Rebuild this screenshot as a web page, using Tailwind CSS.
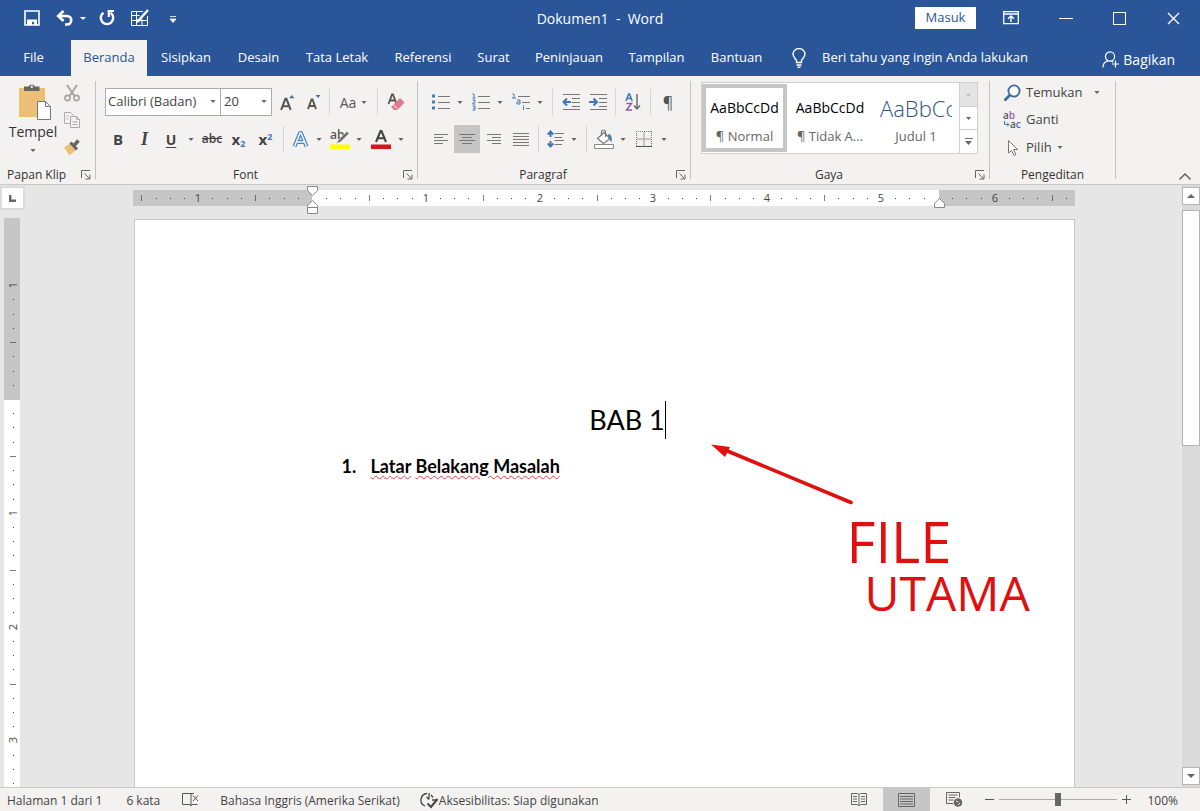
<!DOCTYPE html>
<html lang="id">
<head>
<meta charset="utf-8">
<title>Dokumen1 - Word</title>
<script src="https://cdn.jsdelivr.net/npm/@tailwindcss/browser@4"></script>
</head>
<body class="flex h-screen flex-col overflow-hidden bg-[#e6e6e6] font-['Open_Sans','Noto_Sans',sans-serif] text-[13px] text-[#444]">

<svg class="hidden">
  <symbol id="caret" viewBox="0 0 7 4"><path d="M0 0h7L3.500 4z" fill="#666"/></symbol>
  <symbol id="launch" viewBox="0 0 10 10"><path d="M.5 8V.5H9M3.500 3.500l5 5M9 4.500V9H4.500" fill="none" stroke="#666"/></symbol>
</svg>

<!-- Title bar -->
<header class="shrink-0 bg-[#2a5699] text-white">
  <div class="grid h-10 grid-cols-[1fr_auto_1fr] items-center">
    <div class="flex items-center pb-1 pl-6">
      <button aria-label="Simpan" class="mr-4"><svg class="size-4" viewBox="0 0 16 16"><path d="M1 1h14v14H1z" fill="none" stroke="#fff" stroke-width="1.600"/><path d="M3 9.500h10V15h-3v-3H8v3H3z" fill="#fff"/></svg></button>
      <button aria-label="Urungkan" class="flex items-center gap-[6px]"><svg class="h-4 w-[18px]" viewBox="0 0 18 16"><path d="M2 6h9a4 4 0 0 1 0 8.500H9" fill="none" stroke="#fff" stroke-width="2.600"/><path d="M7.500 1L2.200 6l5.300 5" fill="none" stroke="#fff" stroke-width="2.600"/></svg><svg class="h-[3px] w-[6px]" viewBox="0 0 6 3"><path d="M0 0h6L3 3z" fill="#fff"/></svg></button>
      <button aria-label="Ulangi" class="ml-[13px]"><svg class="size-4" viewBox="0 0 16 16"><path d="M4.500 2.800A6.200 6.200 0 1 0 11.500 2.800" fill="none" stroke="#fff" stroke-width="2.400"/><path d="M8.600.9h6.400M9.800 0v7" fill="none" stroke="#fff" stroke-width="2.200"/></svg></button>
      <button aria-label="Gambar tabel" class="ml-4"><svg class="size-[18px]" viewBox="0 0 18 18" fill="none" stroke="#fff"><path d="M12 2.500H.5v14h16V7M.5 6.500h8M.5 11.500h16M5.500 2.500v14M11 10v6.500"/><path d="M17 1L7.500 11.500" stroke-width="2.400"/><path d="M7 10l-1.500 3.500L9 12z" fill="#fff"/></svg></button>
      <button aria-label="Sesuaikan bilah akses cepat" class="mt-[2px] ml-[21px]"><svg class="h-[7px] w-[6px]" viewBox="0 0 6 7"><path d="M0 .5h6M0 3h6L3 6.500z" fill="#fff" stroke="#fff" stroke-width=".8"/></svg></button>
    </div>
    <h1 class="pb-1 text-[14px] whitespace-pre">Dokumen1  -  Word</h1>
    <div class="flex items-center justify-end pb-1">
      <button class="h-[22px] w-[61px] bg-white text-[#2a5699]">Masuk</button>
      <button aria-label="Opsi tampilan pita" class="ml-[27px] w-[18px]"><svg class="h-[14px] w-4" viewBox="0 0 16 14" fill="none" stroke="#fff"><path d="M.7 .7h14.600v12H.7zM.7 3h14.600" stroke-width="1.300"/><path d="M8 11V5M5 7.800L8 5l3 2.800" stroke-width="1.400"/></svg></button>
      <button aria-label="Perkecil" class="ml-[38px] h-3 w-[14px]"><span class="block h-px bg-white"></span></button>
      <button aria-label="Perbesar" class="ml-[40px] size-[13px] border border-white"></button>
      <button aria-label="Tutup" class="mr-5 ml-[41px]"><svg class="size-[13px]" viewBox="0 0 13 13"><path d="M1 1l11 11M12 1L1 12" stroke="#fff" stroke-width="1.400"/></svg></button>
    </div>
  </div>
  <!-- Ribbon tabs -->
  <nav class="flex h-9 items-stretch pl-[9px]">
    <button class="w-[49px]">File</button>
    <button class="ml-[13px] w-[76px] bg-[#f3f2f1] text-[#2a5699]">Beranda</button>
    <button class="w-[78px]">Sisipkan</button>
    <button class="w-[67px]">Desain</button>
    <button class="w-[90px]">Tata Letak</button>
    <button class="w-[82px]">Referensi</button>
    <button class="w-[59px]">Surat</button>
    <button class="w-[92px]">Peninjauan</button>
    <button class="w-[83px]">Tampilan</button>
    <button class="w-[77px]">Bantuan</button>
    <button class="ml-[17px] flex items-center gap-4"><svg class="h-5 w-[14px]" viewBox="0 0 14 20" fill="none" stroke="#fff" stroke-width="1.400"><path d="M4.500 14.500v-2C3.500 10.500 1 9 1 6a6 5.400 0 0 1 12 0c0 3-2.500 4.500-3.500 6.500v2zM4.500 17h5M5.500 19.300h3"/></svg>Beri tahu yang ingin Anda lakukan</button>
    <button class="mr-[25px] ml-auto flex items-center gap-1 pt-[3px] text-[14px]"><svg class="size-[17px]" viewBox="0 0 17 17" fill="none" stroke="#fff" stroke-width="1.200"><circle cx="8" cy="5.500" r="4.600"/><path d="M1 16.500c0-4 2.500-6 5-6.600M9.500 10l1.500 1.200M13.500 9.500v7M10 13h7"/></svg>Bagikan</button>
  </nav>
</header>

<!-- Ribbon -->
<section aria-label="Beranda" class="flex h-[109px] shrink-0 items-start border-b border-[#c8c8c8] bg-[#f3f2f1] pt-[5px]">

  <div class="flex h-[98px] w-24 flex-col border-r border-[#c2c2c2]">
    <div class="flex h-[88px] shrink-0">
      <button class="ml-2 flex w-[50px] flex-col items-center justify-start pt-[3px] text-[#333]">
        <svg class="ml-1 h-9 w-8" viewBox="0 0 32 36"><path d="M0 4h26v29H0z" fill="#ebbf74"/><path d="M5 7V2.500h4.500a3.500 3 0 0 1 6.500 0h4.500V7z" fill="#666"/><circle cx="12.800" cy="2.800" r="1.200" fill="#f3f2f1"/><path d="M18.500 17.500h8l5 5v13h-13z" fill="#fff" stroke="#777"/><path d="M26.500 17.500v5h5" fill="none" stroke="#777"/></svg>
        <span class="text-[14px] leading-6">Tempel</span>
        <svg class="mt-[5px] h-[3px] w-[6px]"><use href="#caret"/></svg>
      </button>
      <div class="flex w-[28px] flex-col items-center gap-[9px] pt-[3px]">
        <button aria-label="Potong"><svg class="size-[18px]" viewBox="0 0 18 18" fill="none" stroke="#a6a6a6" stroke-width="1.600"><path d="M4 1l7.500 11M14 1L6.500 12" stroke-width="2"/><circle cx="4.500" cy="14" r="2.600"/><circle cx="13.500" cy="14" r="2.600"/></svg></button>
        <button aria-label="Salin"><svg class="size-[18px]" viewBox="0 0 18 18" fill="#f3f2f1" stroke="#b0a9b5"><path d="M1.500 1.500h6l3 3v8h-9z"/><path d="M7.500 5.500h6l3 3v8h-9zM13.500 5.500v3h3M9.500 11h5M9.500 13.500h5M3.500 5h2M3.500 8h2"/></svg></button>
        <button aria-label="Pewarna format"><svg class="size-[18px]" viewBox="0 0 18 18"><path d="M7 5.500L13 12 6.500 17.500 1 9.500z" fill="#ebbf74"/><path d="M7.500 4.500l6.500 7" stroke="#666" stroke-width="3"/><path d="M11 7.500L15.500 2.500" stroke="#666" stroke-width="3.400"/></svg></button>
      </div>
    </div>
    <div class="flex h-[12px] items-center justify-between pr-1 pl-[7px]"><span class="text-[12px] leading-[18px] text-[#333]">Papan Klip</span><button aria-label="Opsi papan klip"><svg class="size-[10px]"><use href="#launch"/></svg></button></div>
  </div>

  <div class="flex h-[98px] w-[322px] flex-col border-r border-[#c2c2c2]">
    <div class="flex h-[88px] shrink-0 flex-col pl-[9px]">
      <div class="mt-[7px] flex h-7 items-center">
        <div class="relative h-7 w-[116px]"><select aria-label="Font" class="size-full appearance-none border border-[#ababab] bg-white pl-[2px]"><option>Calibri (Badan)</option></select><svg class="pointer-events-none absolute top-3 right-[5px] h-[3px] w-[6px]"><use href="#caret"/></svg></div>
        <div class="relative h-7 w-[51px]"><select aria-label="Ukuran font" class="size-full appearance-none border border-l-0 border-[#ababab] bg-white pl-[3px]"><option>20</option></select><svg class="pointer-events-none absolute top-3 right-[5px] h-[3px] w-[6px]"><use href="#caret"/></svg></div>
        <button aria-label="Perbesar font" class="flex w-[30px] justify-center"><svg class="h-[17px] w-[17px]" viewBox="0 0 16 16"><path d="M2 15L6 4.500h1L11 15M3.300 11.500h6.400" fill="none" stroke="#555" stroke-width="1.900"/><path d="M9.500 4L12 1l2.500 3z" fill="#41719c"/></svg></button>
        <button aria-label="Perkecil font" class="flex w-[23px] justify-center"><svg class="h-4 w-4" viewBox="0 0 16 16"><path d="M2 15L5.500 5.500h1L10 15M3.300 12h5.400" fill="none" stroke="#555" stroke-width="1.900"/><path d="M9.500 1L12 4l2.500-3z" fill="#41719c"/></svg></button>
        <span class="mx-1 h-[26px] w-px bg-[#d4d4d4]"></span>
        <button aria-label="Ubah huruf besar/kecil" class="flex w-[39px] items-center justify-center gap-[5px] text-[14px] text-[#555]">Aa<svg class="h-[3px] w-[6px]"><use href="#caret"/></svg></button>
        <span class="mx-1 h-[26px] w-px bg-[#d4d4d4]"></span>
        <button aria-label="Hapus format" class="flex w-[28px] justify-center"><svg class="size-[18px]" viewBox="0 0 18 18"><path d="M1.500 11L5 1.500h1L9.500 11M2.800 7.500h5.500" fill="none" stroke="#555" stroke-width="1.800"/><path d="M13 5l4.500 4.500-7 7.500H7l-3-3z" fill="#e0798a"/><path d="M6 11.500l5 5" stroke="#f3f2f1"/></svg></button>
      </div>
      <div class="mt-[9px] flex h-7 items-center">
        <button aria-label="Tebal" class="w-[26px] text-[15px] font-bold">B</button>
        <button aria-label="Miring" class="w-[27px] font-['Liberation_Serif',serif] text-[18px] font-bold italic">I</button>
        <button aria-label="Garis bawah" class="flex w-[41px] items-center"><span class="w-[26px] text-[14px] font-bold underline underline-offset-2">U</span><span class="flex w-[14px] justify-center"><svg class="h-[3px] w-[6px]"><use href="#caret"/></svg></span></button>
        <button aria-label="Coret" class="w-[26px] text-[12px] font-semibold line-through">abc</button>
        <button aria-label="Subskrip" class="w-[27px] text-[15px] leading-none font-bold">x<sub class="text-[9px] text-[#3c78b4]">2</sub></button>
        <button aria-label="Superskrip" class="w-[27px] text-[15px] leading-none font-bold">x<sup class="text-[9px] text-[#3c78b4]">2</sup></button>
        <span class="mr-[3px] ml-1 h-[26px] w-px bg-[#d4d4d4]"></span>
        <button aria-label="Efek teks" class="flex w-[38px] items-center"><span class="flex w-[26px] justify-center"><svg class="size-[17px]" viewBox="0 0 17 17"><path d="M2.500 15.500L8 2h1l5.500 13.500M4.500 11h8" fill="none" stroke="#4a86c0" stroke-width="4" stroke-linejoin="round"/><path d="M2.500 15.500L8 2h1l5.500 13.500M4.500 11h8" fill="none" stroke="#f3f8fd" stroke-width="1.500"/></svg></span><span class="flex w-3 justify-center"><svg class="h-[3px] w-[6px]"><use href="#caret"/></svg></span></button>
        <button aria-label="Warna sorotan" class="ml-[2px] flex w-[38px] items-center"><span class="flex w-[26px] justify-center"><svg class="h-5 w-5 overflow-visible" viewBox="0 0 20 20"><text x="0" y="10" font-size="12" font-weight="600" fill="#555" font-family="Open Sans, sans-serif">ab</text><path d="M8.500 11L17 2.500l2 2L10.500 13 6 14.500z" fill="#666" stroke="#f3f2f1" stroke-width=".6"/><path d="M0 15.500h20V20H0z" fill="#ff0"/></svg></span><span class="flex w-3 justify-center"><svg class="h-[3px] w-[6px]"><use href="#caret"/></svg></span></button>
        <button aria-label="Warna font" class="ml-[3px] flex w-[40px] items-center"><span class="flex w-[26px] justify-center"><svg class="h-5 w-5" viewBox="0 0 20 20"><path d="M5 13L9.500 2h1L15 13M6.500 9.300h7" fill="none" stroke="#444" stroke-width="2.100"/><path d="M0 15.500h20V20H0z" fill="#d81414"/></svg></span><span class="flex w-[14px] justify-center"><svg class="h-[3px] w-[6px]"><use href="#caret"/></svg></span></button>
      </div>
    </div>
    <div class="grid h-[12px] grid-cols-[1fr_auto_1fr] grid-rows-[12px] items-center pr-1"><span></span><span class="pr-[18px] text-[12px] leading-[18px] text-[#333]">Font</span><button aria-label="Opsi font" class="justify-self-end"><svg class="size-[10px]"><use href="#launch"/></svg></button></div>
  </div>

  <div class="flex h-[98px] w-[273px] flex-col border-r border-[#c2c2c2]">
    <div class="flex h-[88px] shrink-0 flex-col pl-[10px]">
      <div class="mt-[7px] flex h-7 items-center">
        <button aria-label="Poin" class="flex w-[38px] items-center"><span class="flex w-[26px] justify-center"><svg class="h-4 w-[18px]" viewBox="0 0 18 16"><path d="M0 .5h3v3H0zM0 6.500h3v3H0zM0 12.500h3v3H0z" fill="#4a7ab5"/><path d="M6 2.500h12M6 8.500h12M6 14.500h12" stroke="#777"/></svg></span><span class="flex w-3 justify-center"><svg class="h-[3px] w-[6px]"><use href="#caret"/></svg></span></button>
        <button aria-label="Penomoran" class="ml-[2px] flex w-[38px] items-center"><span class="flex w-[26px] justify-center"><svg class="h-[18px] w-[18px]" viewBox="0 0 18 18"><path d="M.5 1H2v4M.5 5h3M.5 7h2.500v2L.5 10.500V11H3.500M.5 13h2.500v4H.5M1 15h2" fill="none" stroke="#4a7ab5"/><path d="M6 3.500h12M6 9.500h12M6 15.500h12" stroke="#777"/></svg></span><span class="flex w-3 justify-center"><svg class="h-[3px] w-[6px]"><use href="#caret"/></svg></span></button>
        <button aria-label="Daftar bertingkat" class="ml-[2px] flex w-[38px] items-center"><span class="flex w-[26px] justify-center"><svg class="h-[18px] w-[18px]" viewBox="0 0 18 18"><path d="M.5 1H2v4M0 5h4M5 7h3v4H5V9h3M11.500 12v.8M11.500 13.500V17" fill="none" stroke="#4a7ab5"/><path d="M6 3.500h12M10 9.500h8M14 15.500h4" stroke="#777"/></svg></span><span class="flex w-3 justify-center"><svg class="h-[3px] w-[6px]"><use href="#caret"/></svg></span></button>
        <span class="mr-1 ml-[6px] h-[26px] w-px bg-[#d4d4d4]"></span>
        <button aria-label="Kurangi inden" class="flex w-[27px] justify-center"><svg class="h-4 w-[18px]" viewBox="0 0 18 16"><path d="M1 .5h17M10 4.500h8M10 8.500h8M10 12.500h8M1 15.500h17" stroke="#777"/><path d="M9 8H2M5 4.500L1.500 8 5 11.500" fill="none" stroke="#3f74b5" stroke-width="2"/></svg></button>
        <button aria-label="Tambah inden" class="flex w-[27px] justify-center"><svg class="h-4 w-[18px]" viewBox="0 0 18 16"><path d="M1 .5h17M10 4.500h8M10 8.500h8M10 12.500h8M1 15.500h17" stroke="#777"/><path d="M0 8h7M4.500 4.500L8 8l-3.500 3.500" fill="none" stroke="#3f74b5" stroke-width="2"/></svg></button>
        <span class="mx-1 h-[26px] w-px bg-[#d4d4d4]"></span>
        <button aria-label="Urutkan" class="flex w-[26px] justify-center"><svg class="h-[18px] w-4" viewBox="0 0 16 18" fill="none"><path d="M1 8L3.700 1h.8L7.200 8M2 5.500h4.200" stroke="#3f74b5" stroke-width="1.500"/><path d="M1.500 10.500h5L1.500 17h5.500" stroke="#8e5aa8" stroke-width="1.500"/><path d="M12 1v15M9 12.500l3 3.500 3-3.500" stroke="#666" stroke-width="1.400"/></svg></button>
        <span class="mx-1 h-[26px] w-px bg-[#d4d4d4]"></span>
        <button aria-label="Tampilkan tanda paragraf" class="w-[26px] text-[16px] text-[#555]">¶</button>
      </div>
      <div class="mt-[9px] flex h-7 items-center">
        <button aria-label="Rata kiri" class="flex h-7 w-[26px] items-center justify-center"><svg class="h-3 w-[14px]" viewBox="0 0 14 12"><path d="M0 1.500h14M0 4.500h9M0 7.500h14M0 10.500h9" stroke="#777"/></svg></button>
        <button aria-label="Rata tengah" aria-pressed="true" class="flex h-7 w-[26px] items-center justify-center bg-[#c6c6c6]"><svg class="h-3 w-4" viewBox="0 0 16 12"><path d="M0 1.500h16M3 4.500h10M0 7.500h16M3 10.500h10" stroke="#777"/></svg></button>
        <button aria-label="Rata kanan" class="flex h-7 w-[27px] items-center justify-center"><svg class="h-3 w-[14px]" viewBox="0 0 14 12"><path d="M0 1.500h14M5 4.500h9M0 7.500h14M5 10.500h9" stroke="#777"/></svg></button>
        <button aria-label="Rata kiri-kanan" class="flex h-7 w-[27px] items-center justify-center"><svg class="h-[13px] w-4" viewBox="0 0 16 13"><path d="M0 .5h16M0 3.500h16M0 6.500h16M0 9.500h16M0 12.500h16" stroke="#777"/></svg></button>
        <span class="mr-[3px] ml-1 h-[26px] w-px bg-[#d4d4d4]"></span>
        <button aria-label="Spasi baris" class="flex w-[38px] items-center"><span class="flex w-[26px] justify-center"><svg class="h-[18px] w-[17px]" viewBox="0 0 17 18"><path d="M3.500 1.500v5.500M3.500 11v5.500M.8 4.500L3.500 1.500l2.700 3M.8 13.500l2.700 3 2.700-3" fill="none" stroke="#3f74b5" stroke-width="1.900"/><path d="M7.500 3.500H17M7.500 7.500H15M7.500 10.500H17M7.500 14.500H15" stroke="#777"/></svg></span><span class="flex w-3 justify-center"><svg class="h-[3px] w-[6px]"><use href="#caret"/></svg></span></button>
        <span class="mr-1 ml-[6px] h-[26px] w-px bg-[#d4d4d4]"></span>
        <button aria-label="Arsiran" class="flex w-[38px] items-center"><span class="flex w-[26px] justify-center"><svg class="h-5 w-5" viewBox="0 0 20 20" fill="none"><path d="M10 3.500l6 6-6.500 5-6-5z" fill="#fff" stroke="#777" stroke-width="1.200"/><path d="M7.500 6.500V3a2 2 0 0 1 4 0v5" stroke="#777" stroke-width="1.200"/><path d="M14 5c3 0 4.500 3 3.500 8.500L14.500 9z" fill="#4a7f9f"/><path d="M.5 15.500h19v4H.5z" fill="#fff" stroke="#888"/></svg></span><span class="flex w-3 justify-center"><svg class="h-[3px] w-[6px]"><use href="#caret"/></svg></span></button>
        <button aria-label="Batas" class="ml-[2px] flex w-[40px] items-center"><span class="flex w-[26px] justify-center"><svg class="h-4 w-4" viewBox="0 0 16 16" fill="none" stroke="#777"><path d="M.5 0v15M15.500 0v15M0 .5h16" stroke-dasharray="1 1"/><path d="M8 1v14M1 8h14" stroke="#999"/><path d="M0 15.500h16" stroke="#555"/></svg></span><span class="flex w-[14px] justify-center"><svg class="h-[3px] w-[6px]"><use href="#caret"/></svg></span></button>
      </div>
    </div>
    <div class="grid h-[12px] grid-cols-[1fr_auto_1fr] grid-rows-[12px] items-center pr-1"><span></span><span class="pr-[18px] text-[12px] leading-[18px] text-[#333]">Paragraf</span><button aria-label="Opsi paragraf" class="justify-self-end"><svg class="size-[10px]"><use href="#launch"/></svg></button></div>
  </div>

  <div class="flex h-[98px] w-[299px] flex-col border-r border-[#c2c2c2]">
    <div class="h-[88px] shrink-0 pl-[10px]">
      <div class="mt-px flex h-[72px] w-[277px] border border-[#d0d0d0] bg-white">
        <button class="my-px flex w-[85px] shrink-0 flex-col items-center justify-start overflow-hidden border-4 border-[#c6c6c6]"><span class="pt-[6px] text-[14px] leading-7 text-black">AaBbCcDd</span><span class="leading-[28px] whitespace-nowrap text-[#666]">¶ Normal</span></button>
        <button class="flex w-[86px] shrink-0 flex-col items-center justify-start overflow-hidden pt-[5px]"><span class="pt-[6px] text-[14px] leading-7 text-black">AaBbCcDd</span><span class="leading-[28px] whitespace-nowrap text-[#666]">¶ Tidak A...</span></button>
        <button class="flex w-[86px] shrink-0 flex-col items-center justify-start px-[7px] pt-[5px]"><span class="w-[72px] overflow-hidden pt-[6px] text-left text-[22px] leading-7 font-light whitespace-nowrap text-[#2e5583]">AaBbCc</span><span class="leading-[28px] whitespace-nowrap text-[#666]">Judul 1</span></button>
        <div class="flex flex-1 flex-col border-l border-[#d0d0d0]">
          <button aria-label="Gulir ke atas" class="flex flex-1 items-center justify-center bg-[#e4e4e4]"><svg class="h-[3px] w-[5px]" viewBox="0 0 6 3"><path d="M0 3h6L3 0z" fill="#bbb"/></svg></button>
          <button aria-label="Gulir ke bawah" class="flex flex-1 items-center justify-center border-y border-[#d0d0d0]"><svg class="h-[3px] w-[5px]"><use href="#caret"/></svg></button>
          <button aria-label="Gaya lainnya" class="flex flex-1 flex-col items-center justify-center gap-[2px]"><span class="h-px w-2 bg-[#777]"></span><svg class="h-[4px] w-[7px]"><use href="#caret"/></svg></button>
        </div>
      </div>
    </div>
    <div class="grid h-[12px] grid-cols-[1fr_auto_1fr] grid-rows-[12px] items-center pr-1"><span></span><span class="pr-[18px] text-[12px] leading-[18px] text-[#333]">Gaya</span><button aria-label="Opsi gaya" class="justify-self-end"><svg class="size-[10px]"><use href="#launch"/></svg></button></div>
  </div>

  <div class="flex h-[98px] w-[126px] flex-col border-r border-[#c2c2c2]">
    <div class="flex h-[88px] shrink-0 flex-col items-start pl-[13px]">
      <button class="mt-[-2px] flex h-[27px] items-center gap-[5px]"><svg class="size-[18px]" viewBox="0 0 18 18" fill="none"><circle cx="11" cy="7" r="5.600" fill="#fff" stroke="#3a6a9c" stroke-width="1.800"/><path d="M7 11L1.500 16.500" stroke="#3a6a9c" stroke-width="2.600"/></svg>Temukan<svg class="ml-[6px] h-[3px] w-[6px]"><use href="#caret"/></svg></button>
      <button class="flex h-[28px] items-center gap-[5px]"><svg class="size-[18px] overflow-visible" viewBox="0 0 18 18" font-family="Open Sans, sans-serif" font-size="10" font-weight="600"><text x="0" y="8" fill="#555">a<tspan fill="#a05cb8">b</tspan></text><text x="7" y="17" fill="#555">a<tspan fill="#3f74b5">c</tspan></text><path d="M1.500 10v3.500H5.500M4 11.500l2 2-2 2" fill="none" stroke="#3f74b5"/></svg>Ganti</button>
      <button class="flex h-[27px] items-center gap-[5px]"><svg class="size-[18px]" viewBox="0 0 18 18"><path d="M5.500 1.500v12.500l3-2.500 2.500 5 2-1-2.500-5h4z" fill="#fff" stroke="#777"/></svg>Pilih<svg class="h-[3px] w-[6px]"><use href="#caret"/></svg></button>
    </div>
    <div class="flex h-[12px] items-center justify-center text-[12px] leading-[18px] text-[#333]">Pengeditan</div>
  </div>
  <button aria-label="Ciutkan pita" class="mr-[9px] ml-auto self-end pb-1"><svg class="h-[7px] w-3" viewBox="0 0 12 7"><path d="M.5 6.500L6 1l5.500 5.500" fill="none" stroke="#555" stroke-width="1.300"/></svg></button>
</section>

<!-- Workspace -->
<main class="grid min-h-0 flex-1 grid-cols-[26px_1fr_18px]">
  <div class="flex min-h-0 flex-col">
    <button aria-label="Jenis tab" class="mt-px flex h-6 w-[25px] shrink-0 items-center justify-center border-2 border-[#dadada] bg-white"><svg class="size-[7px]" viewBox="0 0 7 7"><path d="M1.200 0v5.800H7" fill="none" stroke="#666" stroke-width="2.400"/></svg></button>
    <div class="mt-2 ml-1 min-h-0 w-4 flex-1 overflow-hidden bg-white"><svg id="vruler" class="h-[570px] w-4" font-family="Open Sans, sans-serif" font-size="11" fill="#444" text-anchor="middle"><path d="M0 0h16v182H0z" fill="#c6c6c6"/></svg></div>
  </div>

  <div class="flex min-h-0 flex-col items-center overflow-hidden">
    <div class="h-[34px] shrink-0 pt-px">
      <svg id="hruler" class="h-7 w-[942px]" font-family="Open Sans, sans-serif" font-size="11" fill="#444" text-anchor="middle">
        <path d="M0 4h942v16H0z" fill="#c6c6c6"/><path d="M179 4h627v16H179z" fill="#fff"/>
      </svg>
    </div>
    <article class="relative flex min-h-0 w-[941px] flex-1 flex-col border border-b-0 border-[#c6c6c6] bg-white pr-[131px] pl-[178px] font-['Lato',sans-serif] text-black">
      <p class="mt-[180px] flex h-10 items-center justify-center text-[27px]">BAB 1<span class="h-[38px] w-px bg-black"></span></p>
      <ol class="mt-[14px] ml-[29px] text-[18px] leading-6 font-bold">
        <li class="flex"><span class="w-[29px]">1.</span><p><span class="underline decoration-[#e04040] decoration-wavy decoration-1 underline-offset-2">Latar</span> <span class="underline decoration-[#e04040] decoration-wavy decoration-1 underline-offset-2">Belakang Masalah</span></p></li>
      </ol>
      <!-- Red annotation over the page -->
      <svg class="absolute top-[224px] left-[576px] h-[62px] w-[146px]" viewBox="0 0 146 62"><path d="M140 58.500L14 6" stroke="#e01010" stroke-width="3.600" stroke-linecap="round"/><path d="M0 .5L19 3l-5 10z" fill="#e01010"/></svg>
      <div class="absolute top-[289px] left-[712px] font-['Open_Sans',sans-serif] text-[#e01010]">
        <p class="text-[56px] leading-[64px]">FILE</p>
        <p class="pl-[18px] text-[48px] leading-[40px]">UTAMA</p>
      </div>
    </article>
  </div>

  <div class="flex min-h-0 flex-col bg-[#dadada]">
    <button aria-label="Gulir naik" class="mt-[2px] flex h-[18px] w-[18px] shrink-0 items-center justify-center border border-[#b4b4b4] bg-white"><svg class="h-[4px] w-[8px]" viewBox="0 0 8 4"><path d="M0 4h8L4 0z" fill="#666"/></svg></button>
    <div class="mt-[5px] h-[236px] shrink-0 border border-[#b4b4b4] bg-white"></div>
    <button aria-label="Gulir turun" class="mt-auto mb-[2px] flex h-[18px] w-[18px] shrink-0 items-center justify-center border border-[#b4b4b4] bg-white"><svg class="h-[4px] w-[8px]" viewBox="0 0 8 4"><path d="M0 0h8L4 4z" fill="#666"/></svg></button>
  </div>
</main>

<!-- Status bar -->
<footer class="flex h-6 shrink-0 items-center border-t border-[#c8c8c8] bg-[#f3f2f1] pl-[7px] text-[12px]">
  <span class="pt-[2px]">Halaman 1 dari 1</span>
  <span class="ml-6 pt-[2px]">6 kata</span>
  <button aria-label="Pemeriksaan ejaan" class="ml-[22px]"><svg class="h-[14px] w-[18px]" viewBox="0 0 18 14" fill="none" stroke="#555"><path d="M12 .5H.5v11H8l1 1.500 1-1.500h5.500M9 .5v12M11 2.500l5 5.500M16 2.500L11 8"/></svg></button>
  <span class="ml-5 pt-[2px]">Bahasa Inggris (Amerika Serikat)</span>
  <button class="ml-5 flex items-center pt-[2px]"><svg class="h-[17px] w-[19px]" viewBox="0 0 19 17" fill="none" stroke="#444" stroke-width="1.300"><path d="M7 1.500A6.500 6.500 0 0 0 5 14M9 1v6M6.500 5L9 7.500M11 3l2 2.500M12 8h4"/><path d="M7.500 11.500l3.500 3.500 6.500-8" stroke-width="2"/></svg>Aksesibilitas: Siap digunakan</button>
  <div class="ml-auto flex h-full items-center">
    <button aria-label="Mode baca" class="flex h-full w-12 items-center justify-center"><svg class="h-[14px] w-4" viewBox="0 0 16 14" fill="none" stroke="#666"><path d="M8 13V1.500L6.500.5h-6v11h6L8 13l1.500-1.500h6V.5h-6L8 1.500M2 3.500h4M2 6h4M2 8.500h4M10 3.500h4M10 6h4M10 8.500h4"/></svg></button>
    <button aria-label="Tata letak cetak" aria-pressed="true" class="flex h-full w-[47px] items-center justify-center bg-[#c6c6c6]"><svg class="h-[14px] w-[17px]" viewBox="0 0 17 14" fill="none" stroke="#666"><path d="M.5.5h16v13H.5zM2 3.500h13M2 6h13M2 8.500h13M2 11h13"/></svg></button>
    <button aria-label="Tata letak web" class="flex h-full w-12 items-center justify-center"><svg class="h-[15px] w-[17px]" viewBox="0 0 17 15" fill="none" stroke="#666"><path d="M7.500 11.500h-7V.5h13v5M2.500 3h9M2.500 5.500h7M2.500 8h5"/><circle cx="12" cy="10.500" r="3.800" fill="#666"/><path d="M10 9l2.500 1M12 13l2-2" stroke="#eee"/></svg></button>
    <button aria-label="Perkecil tampilan" class="ml-1 h-full w-[14px]"><span class="mx-auto block h-px w-[9px] bg-[#555]"></span></button>
    <input type="range" aria-label="Zum" min="10" max="190" value="100" class="ml-[3px] h-4 w-[118px] appearance-none bg-transparent [&::-webkit-slider-runnable-track]:h-px [&::-webkit-slider-runnable-track]:bg-[#aaa] [&::-webkit-slider-thumb]:-mt-[6px] [&::-webkit-slider-thumb]:h-[13px] [&::-webkit-slider-thumb]:w-[6px] [&::-webkit-slider-thumb]:appearance-none [&::-webkit-slider-thumb]:bg-[#666]">
    <button aria-label="Perbesar tampilan" class="ml-[5px]"><svg class="size-[9px]" viewBox="0 0 9 9"><path d="M0 4.500h9M4.500 0v9" stroke="#555"/></svg></button>
    <button class="mr-[22px] ml-4 pt-[2px]">100%</button>
  </div>
</footer>

<script>
  // Ruler scale: one inch is 113.8 px, split into eighths.
  const NS = 'http://www.w3.org/2000/svg';
  function add(svg, tag, attrs, text) {
    const el = document.createElementNS(NS, tag);
    for (const k in attrs) el.setAttribute(k, attrs[k]);
    if (text) el.textContent = text;
    svg.appendChild(el);
  }
  const h = document.getElementById('hruler');
  for (let i = -12; i <= 53; i++) {
    const x = Math.round(179 + i * 113.8 / 8);
    if (i === 0 || i === 44) continue;
    if (i % 8 === 0) add(h, 'text', { x, y: 16 }, String(Math.abs(i / 8)));
    else if (i % 4 === 0) add(h, 'rect', { x, y: 9, width: 1, height: 6, opacity: .7 });
    else add(h, 'rect', { x, y: 12, width: 1, height: 1 });
  }
  const marker = { fill: '#fff', stroke: '#888' };
  add(h, 'path', { ...marker, d: 'M174.500 .5h10v4l-5 5-5-5z' });
  add(h, 'path', { ...marker, d: 'M174.500 27.500v-8l5-5 5 5v8zM174.500 21.500h10' });
  add(h, 'path', { ...marker, d: 'M801.500 21.500v-4l5-5 5 5v4z' });
  const v = document.getElementById('vruler');
  for (let i = -8; i <= 27; i++) {
    const y = Math.round(181 + i * 113.8 / 8);
    if (i === 0) continue;
    if (i % 8 === 0) add(v, 'text', { x: 0, y: 0, transform: `translate(13 ${y}) rotate(-90)` }, String(Math.abs(i / 8)));
    else if (i % 4 === 0) add(v, 'rect', { x: 6, y, width: 6, height: 1, opacity: .7 });
    else add(v, 'rect', { x: 9, y, width: 1, height: 1 });
  }
</script>
</body>
</html>
